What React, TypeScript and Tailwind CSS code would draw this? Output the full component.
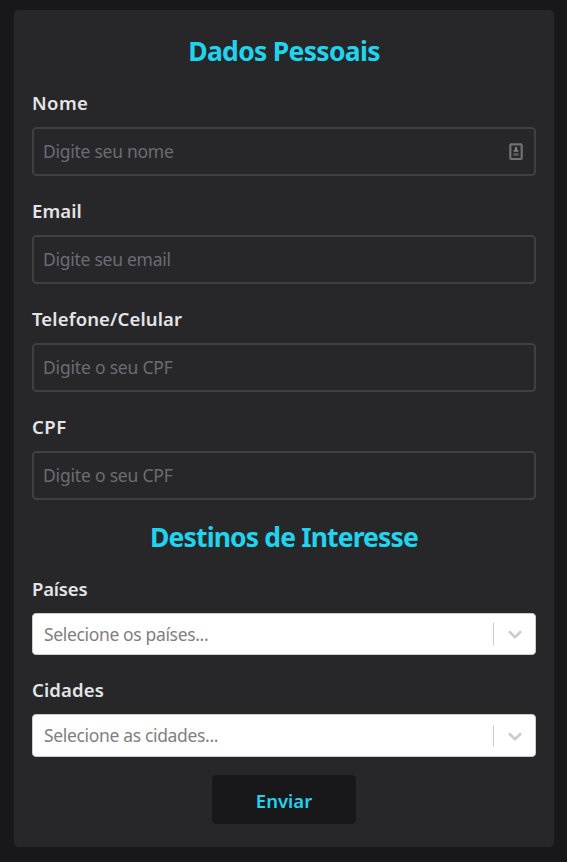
import React from "react";

function Title({ text, className }: { text: string; className: string }) {
  return (
    <h2 className={`h-9 whitespace-nowrap text-center text-[26.5px] font-bold leading-[35px] text-[#22d3ee] ${className}`}>
      {text}
    </h2>
  );
}

function Label({ text, className }: { text: string; className: string }) {
  return (
    <label className="mb-2.5 block h-[27px] text-[18.5px] font-semibold leading-[26px] text-[#e4e4e7]">
      <span className={className}>{text}</span>
    </label>
  );
}

function ContactIcon() {
  return (
    <svg width="14" height="18" viewBox="0 0 14 18" fill="none" className="mr-0.5 shrink-0">
      <rect x="1.300" y="1.300" width="11.400" height="14.700" rx="1" stroke="#717174" strokeWidth="2.200" />
      <path d="M6 4h2v2.200l1.400 1.300v1.200H4.600V7.500l1.400-1.300z" fill="#808082" />
      <path d="M4.300 10.200h5.400v2.600H4.300z" fill="#5c5c5f" />
    </svg>
  );
}

interface FieldProps {
  label: string;
  placeholder: string;
  labelClass: string;
  inputClass: string;
  icon?: boolean;
}

function Field({ label, placeholder, labelClass, inputClass, icon }: FieldProps) {
  return (
    <div>
      <Label text={label} className={labelClass} />
      <div className="flex h-[49px] items-center rounded-[4.5px] border-2 border-[#3f3f46] px-[9px]">
        <input
          type="text"
          placeholder={placeholder}
          className={`h-full min-w-0 flex-1 bg-transparent pb-px text-[17.5px] font-normal text-[#e4e4e7] outline-none placeholder:text-[#696c74] ${inputClass}`}
        />
        {icon && <ContactIcon />}
      </div>
    </div>
  );
}

interface SelectProps {
  label: string;
  placeholder: string;
  labelClass: string;
  textClass: string;
  boxClass: string;
}

function Select({ label, placeholder, labelClass, textClass, boxClass }: SelectProps) {
  return (
    <div>
      <Label text={label} className={labelClass} />
      <div className={`flex items-center rounded-[4px] border border-[#cccccc] bg-white ${boxClass}`}>
        <div className="flex-1 pl-[11px] text-[17.5px] font-normal leading-[27px] text-[#808080]">
          <span className={textClass}>{placeholder}</span>
        </div>
        <span className="h-[22px] w-px bg-[#cccccc]" />
        <span className="flex w-[41px] justify-center">
          <svg width="22" height="22" viewBox="0 0 20 20" fill="#cccccc" stroke="#cccccc" strokeWidth="0.4">
            <path d="M4.516 7.548c0.436-0.446 1.043-0.481 1.576 0l3.908 3.747 3.908-3.747c0.533-0.481 1.141-0.446 1.574 0 0.436 0.445 0.408 1.197 0 1.615-0.406 0.418-4.695 4.502-4.695 4.502-0.217 0.223-0.502 0.335-0.787 0.335s-0.570-0.112-0.789-0.335c0 0-4.287-4.084-4.695-4.502s-0.436-1.170 0-1.615z" />
          </svg>
        </span>
      </div>
    </div>
  );
}

export default function App() {
  return (
    <main className="flex h-[862px] w-[567px] bg-[#18181b] pl-3.5 pt-2.5 font-['Noto_Sans',sans-serif]">
      <form className="h-[837px] w-[540px] rounded-[4.5px] bg-[#27272a] px-[18px] pt-6">
        <Title text="Dados Pessoais" className="tracking-[-0.7px]" />
        <div className="mt-5 flex flex-col gap-[22px]">
          <Field label="Nome" placeholder="Digite seu nome" labelClass="tracking-[0.4px]" inputClass="tracking-[-0.27px]" icon />
          <Field label="Email" placeholder="Digite seu email" labelClass="tracking-[0.1px]" inputClass="tracking-[-0.27px]" />
          <Field label="Telefone/Celular" placeholder="Digite o seu CPF" labelClass="tracking-[0.13px]" inputClass="tracking-[-0.2px]" />
          <Field label="CPF" placeholder="Digite o seu CPF" labelClass="tracking-[0.5px]" inputClass="tracking-[-0.2px]" />
        </div>
        <div className="mt-5">
          <Title text="Destinos de Interesse" className="tracking-[-0.85px]" />
        </div>
        <div className="mt-5 flex flex-col gap-[22px]">
          <Select label="Países" placeholder="Selecione os países..." labelClass="tracking-[-0.2px]" textClass="tracking-[-0.35px]" boxClass="h-[42px]" />
          <Select label="Cidades" placeholder="Selecione as cidades..." labelClass="tracking-[0.15px]" textClass="tracking-[-0.34px]" boxClass="h-[43px]" />
        </div>
        <button
          type="button"
          className="mx-auto mt-[18px] flex h-[49px] w-36 items-center justify-center rounded-[4.5px] bg-[#18181b] pt-[3px] text-[18.5px] font-semibold text-[#22d3ee]"
        >
          Enviar
        </button>
      </form>
    </main>
  );
}
